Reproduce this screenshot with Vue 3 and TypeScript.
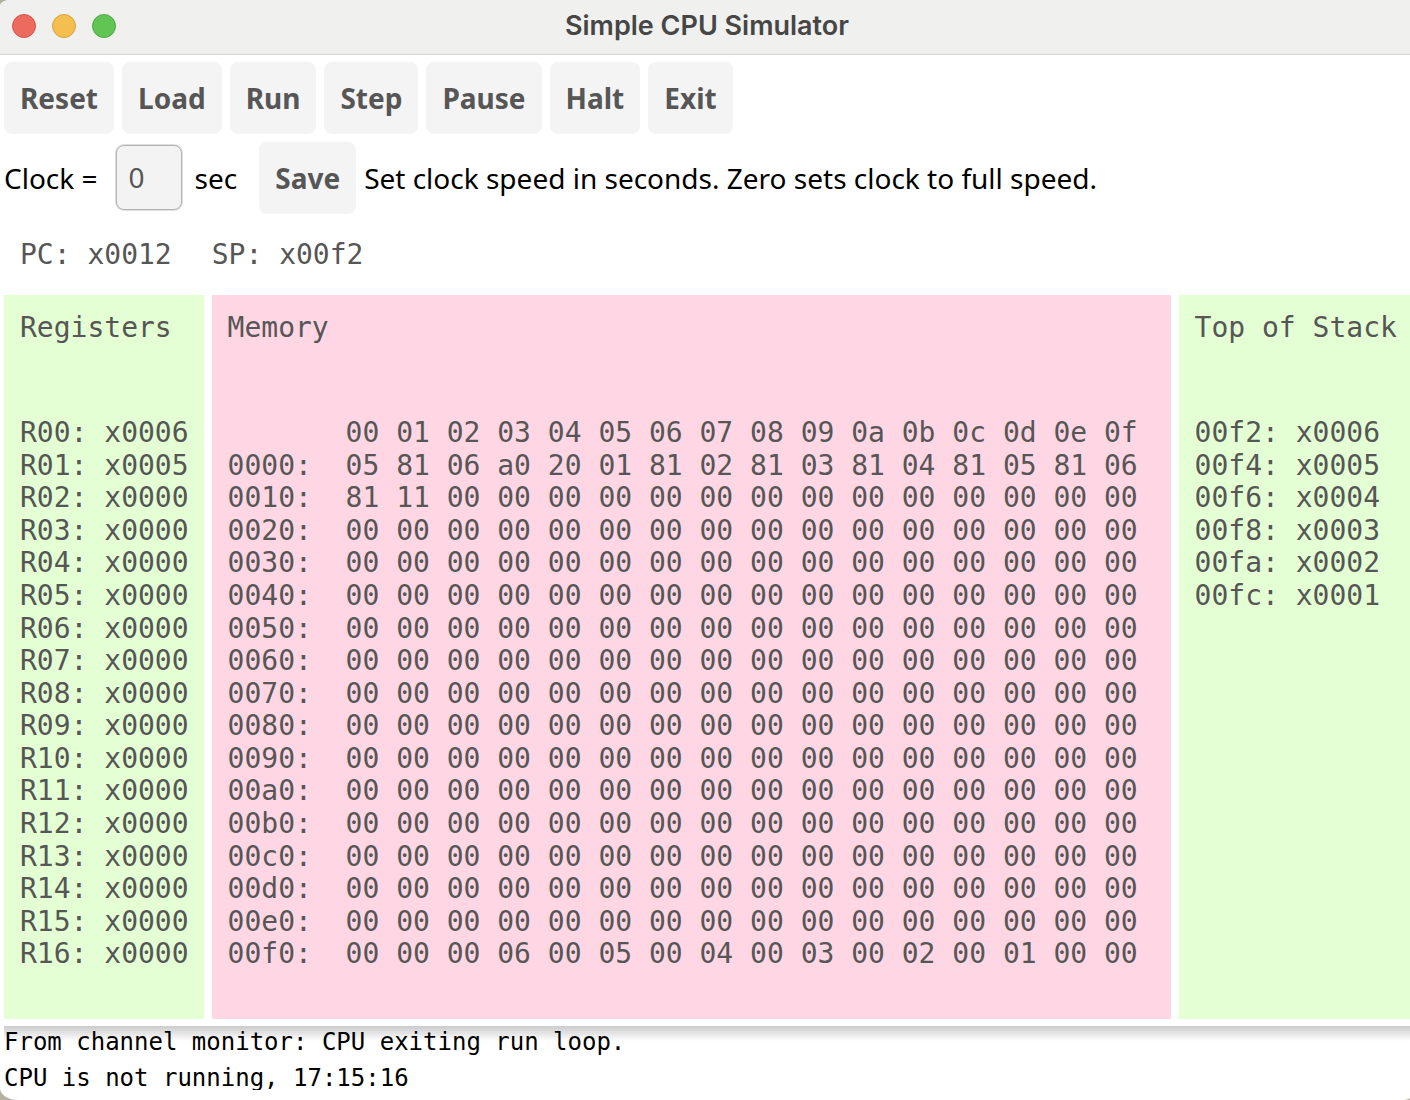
<script setup lang="ts">
import { ref } from 'vue'

const actions: string[] = ['Reset', 'Load', 'Run', 'Step', 'Pause', 'Halt', 'Exit']

const clock = ref<string>('0')
const pc = 'x0012'
const sp = 'x00f2'

const hex = (value: number, width: number): string => value.toString(16).padStart(width, '0')

const registers = Array.from({ length: 17 }, (_, i) => ({
  name: `R${String(i).padStart(2, '0')}:`,
  value: i === 0 ? 'x0006' : i === 1 ? 'x0005' : 'x0000',
}))

const zeroRow = '00 00 00 00 00 00 00 00 00 00 00 00 00 00 00 00'
const contents: Record<number, string> = {
  0: '05 81 06 a0 20 01 81 02 81 03 81 04 81 05 81 06',
  1: '81 11 00 00 00 00 00 00 00 00 00 00 00 00 00 00',
  15: '00 00 00 06 00 05 00 04 00 03 00 02 00 01 00 00',
}
const columns = Array.from({ length: 16 }, (_, i) => hex(i, 2))
const memory = Array.from({ length: 16 }, (_, i) => ({
  address: `${hex(i * 16, 4)}:`,
  bytes: (contents[i] ?? zeroRow).split(' '),
}))

const stack = [
  { address: '00f2:', value: 'x0006' },
  { address: '00f4:', value: 'x0005' },
  { address: '00f6:', value: 'x0004' },
  { address: '00f8:', value: 'x0003' },
  { address: '00fa:', value: 'x0002' },
  { address: '00fc:', value: 'x0001' },
]

const log: string[] = [
  'From channel monitor: CPU exiting run loop.',
  'CPU is not running, 17:15:16',
]
</script>

<template>
  <div class="window">
    <header class="titlebar">
      <div class="lights">
        <button class="light close" aria-label="Close"></button>
        <button class="light minimize" aria-label="Minimize"></button>
        <button class="light zoom" aria-label="Zoom"></button>
      </div>
      <h1 class="title">Simple CPU Simulator</h1>
    </header>

    <main class="content">
      <nav class="toolbar">
        <button v-for="action in actions" :key="action" class="button">{{ action }}</button>
      </nav>

      <form class="clock" @submit.prevent>
        <label for="clock">Clock =</label>
        <input id="clock" v-model="clock" class="field" type="text" />
        <span class="unit">sec</span>
        <button class="button" type="submit">Save</button>
        <span>Set clock speed in seconds. Zero sets clock to full speed.</span>
      </form>

      <div class="pointers">
        <span>PC: {{ pc }}</span>
        <span>SP: {{ sp }}</span>
      </div>

      <div class="panels">
        <section class="panel green registers">
          <h2 class="heading">Registers</h2>
          <table class="grid">
            <tbody>
              <tr v-for="r in registers" :key="r.name">
                <th scope="row">{{ r.name }}</th>
                <td>{{ r.value }}</td>
              </tr>
            </tbody>
          </table>
        </section>

        <section class="panel pink">
          <h2 class="heading">Memory</h2>
          <table class="grid memory">
            <tbody>
              <tr>
                <td></td>
                <th v-for="c in columns" :key="c" scope="col">{{ c }}</th>
              </tr>
              <tr v-for="row in memory" :key="row.address">
                <th scope="row">{{ row.address }}</th>
                <td v-for="(b, i) in row.bytes" :key="i">{{ b }}</td>
              </tr>
            </tbody>
          </table>
        </section>

        <section class="panel green stack">
          <h2 class="heading">Top of Stack</h2>
          <table class="grid">
            <tbody>
              <tr v-for="s in stack" :key="s.address">
                <th scope="row">{{ s.address }}</th>
                <td>{{ s.value }}</td>
              </tr>
            </tbody>
          </table>
        </section>
      </div>

      <div class="log" role="log">
        <p v-for="line in log" :key="line">{{ line }}</p>
      </div>
    </main>
  </div>
</template>

<style>
body {
  margin: 0;
  background: #b3b09f;
}
</style>

<style scoped>
.window {
  box-sizing: border-box;
  min-height: 100vh;
  overflow: hidden;
  background: #fff;
  border-radius: 10px 0 10px 18px / 6px 0 2px 12px;
  font-family: 'Noto Sans', sans-serif;
  font-size: 28px;
  color: #000;
}

.titlebar {
  display: grid;
  grid-template-columns: 1fr auto 1fr;
  align-items: center;
  box-sizing: border-box;
  height: 55px;
  padding: 0 8px 2px 12px;
  background: #f0f0ee;
  border-bottom: 1px solid #d5d5d6;
}

.lights {
  display: flex;
  gap: 16px;
}

.light {
  width: 24px;
  height: 24px;
  padding: 0;
  border: 1px solid;
  border-radius: 50%;
}

.close {
  background: #ec6a5e;
  border-color: #d5544a;
}

.minimize {
  background: #f4bf4f;
  border-color: #d8a23d;
}

.zoom {
  background: #61c554;
  border-color: #4fa940;
}

.title {
  margin: 0;
  font: 600 27px/32px Inter, sans-serif;
  color: #464646;
}

.content {
  padding: 7px 0 0 4px;
}

.toolbar {
  display: flex;
  gap: 8px;
}

.button {
  height: 72px;
  padding: 0 16px;
  border: 0;
  border-radius: 8px;
  background: #f4f4f4;
  color: #565656;
  font: 700 28px/40px 'Noto Sans', sans-serif;
}

.clock {
  display: flex;
  align-items: center;
  gap: 8px;
  margin-top: 8px;
}

.field {
  box-sizing: border-box;
  width: 66px;
  height: 65px;
  margin: 0 5px 2px 10px;
  padding: 0 12px;
  border: 1px solid #b4b4b4;
  border-radius: 8px;
  box-shadow: 0 0 0 1px #dedede;
  background: #f3f3f3;
  color: #565656;
  font: 28px/40px 'Noto Sans', sans-serif;
}

.unit {
  margin-right: 14px;
}

.pointers,
.panels {
  font-family: 'DejaVu Sans Mono', monospace;
  line-height: 32px;
  color: #565656;
}

.pointers {
  display: flex;
  gap: 40px;
  padding: 25px 16px 24px;
}

.panels {
  display: flex;
  gap: 8px;
}

.panel {
  flex: none;
  box-sizing: border-box;
  padding: 16px 16px 48px;
}

.green {
  background: #e3ffd3;
}

.pink {
  background: #ffd6e3;
}

.registers {
  padding-right: 15px;
}

.stack {
  flex: 1 1 0;
  min-width: 0;
}

.heading {
  margin: 0 0 72px;
  font: inherit;
  line-height: 34px;
  white-space: nowrap;
}

.grid {
  display: block;
}

.grid tbody {
  display: grid;
  grid-template-rows: repeat(17, 1fr);
  height: 554px;
}

.grid tr {
  display: flex;
  gap: 1ch;
}

.grid th,
.grid td {
  padding: 0;
  font-weight: 400;
  text-align: left;
  white-space: nowrap;
}

.memory {
  padding-right: 1ch;
}

.memory tr > :first-child {
  width: 6ch;
}

.log {
  display: flex;
  flex-direction: column;
  gap: 4px;
  height: 64px;
  margin-top: 7px;
  overflow: hidden;
  background: linear-gradient(#cbcbcb, #fff 15px);
  font: 24px/32px 'DejaVu Sans Mono', monospace;
}

.log p {
  margin: 0;
  white-space: pre;
}
</style>
